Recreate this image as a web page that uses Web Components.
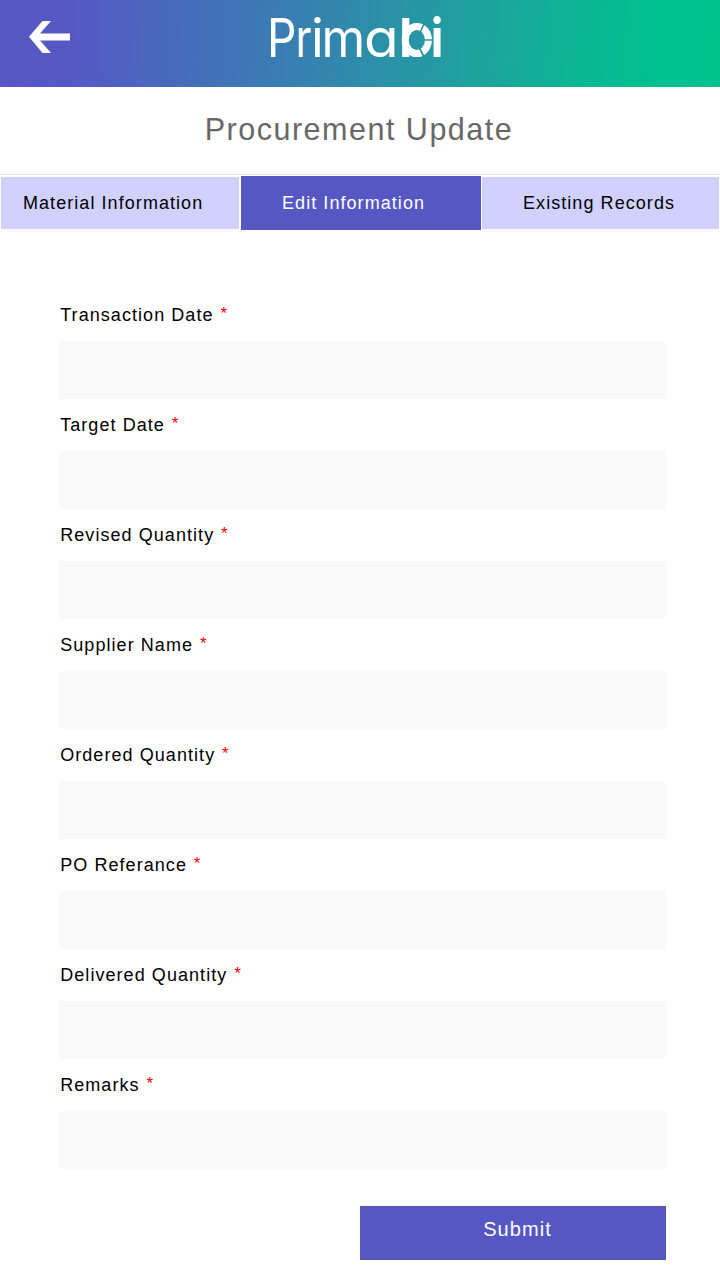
<!DOCTYPE html>
<html lang="en"><head><meta charset="utf-8"><title>Procurement Update</title>
<style>html,body{margin:0;background:#fff}body{font:18px/22px "Liberation Sans",Arial,sans-serif;color:#000;letter-spacing:1.06px}</style></head>
<body><procurement-page></procurement-page>
<script>
const define=(name,html)=>customElements.define(name,class extends HTMLElement{
  constructor(){super();const t=document.createElement('template');t.innerHTML=html;this.attachShadow({mode:'open'}).append(t.content.cloneNode(true));}
});
define('brand-header',`<style>
:host{display:flex;height:87px;box-sizing:border-box;background:linear-gradient(93deg,#5956c5 0%,#5558c4 10%,#3f75b7 33%,#1da39d 67%,#08b893 82%,#00c18e 92%,#00c28d 100%)}
.arrow{margin:20px 0 0 28px}.logo{margin-left:190px}
text{fill:#fff;letter-spacing:0;font:400 53px Inter,sans-serif;font-feature-settings:"cv11"}.b{font-weight:700}
</style>
<svg class="arrow" width="44" height="34"><path d="M1 16.7 14.5 1H23L12 13.4H42V20.6H12L23 33H14.5Z" fill="#fff"/></svg>
<svg class="logo" width="190" height="87" viewBox="262 0 190 87">
<text transform="translate(267 56.5) scale(.87 1)">P</text><text transform="translate(295.6 56.5) scale(.8 1)">r</text><text x="310.9" y="56.5">i</text><text transform="translate(321.4 56.5) scale(.94 1)">m</text><text transform="translate(364 56.5) scale(1.07 1)">a</text>
<text class="b" transform="translate(399.2 56.5) scale(.9 1)">b</text>
<ellipse cx="416.8" cy="40" rx="11.6" ry="13.6" fill="#2994a6" stroke="#fff" stroke-width="7"/>
<path d="M419 34.5 425 22M424 40H434M418.5 46 424.5 58" stroke="#2994a6" stroke-width="1.7"/><text class="b" transform="translate(430.8 56.5) scale(.88 1)">i</text></svg>`);
define('page-title',`<style>:host{display:block;height:87px;border-bottom:1px solid #e2e2e2;text-align:center;font-size:30.5px;line-height:84px;letter-spacing:1.5px;color:#676767}</style><slot></slot>`);
define('tab-bar',`<style>:host{display:flex;height:55px;padding:1px 0 0 1px;box-sizing:border-box}</style><slot></slot>`);
define('tab-item',`<style>:host{display:block;box-sizing:border-box;flex:none;width:var(--w);margin:1px var(--gap,0) 0 0;height:52px;background:#d1d1ff;line-height:52px;padding-left:var(--inset);white-space:nowrap}:host([active]){margin-top:0;height:54px;background:#5757c4;color:#fff;line-height:54px}</style><slot></slot>`);
define('form-field',`<style>:host{display:block;height:110px}label{display:block;height:37px;padding-left:1.2px;white-space:nowrap}.star{color:#f00;font-size:17px;line-height:1;vertical-align:2px;margin-left:.8px}.box{height:58px;background:#fafafa}</style><label><slot></slot> <span class="star">*</span></label><div class="box"></div>`);
define('submit-button',`<style>:host{display:block;width:306px;height:54px;box-sizing:border-box;background:#5757c4;color:#fff;font-size:20px;line-height:46px;text-align:center;padding-left:9px}</style><slot></slot>`);
define('procurement-page',`<style>:host{display:flex;flex-direction:column;width:720px;height:1280px;overflow:hidden;background:#fff}.form{padding:74px 54px 0 59px}submit-button{margin:22px 0 0 301px}page-title{padding-right:2px}</style>
<brand-header></brand-header><page-title>Procurement Update</page-title>
<tab-bar><tab-item style="--w:238px;--gap:2px;--inset:22px">Material Information</tab-item><tab-item active style="--w:240px;--gap:1px;--inset:41px">Edit Information</tab-item><tab-item style="--w:237px;--inset:41px">Existing Records</tab-item></tab-bar>
<div class="form"><form-field>Transaction Date</form-field><form-field>Target Date</form-field><form-field>Revised Quantity</form-field><form-field>Supplier Name</form-field><form-field>Ordered Quantity</form-field><form-field>PO Referance</form-field><form-field>Delivered Quantity</form-field><form-field>Remarks</form-field><submit-button>Submit</submit-button></div>`);
</script></body></html>
